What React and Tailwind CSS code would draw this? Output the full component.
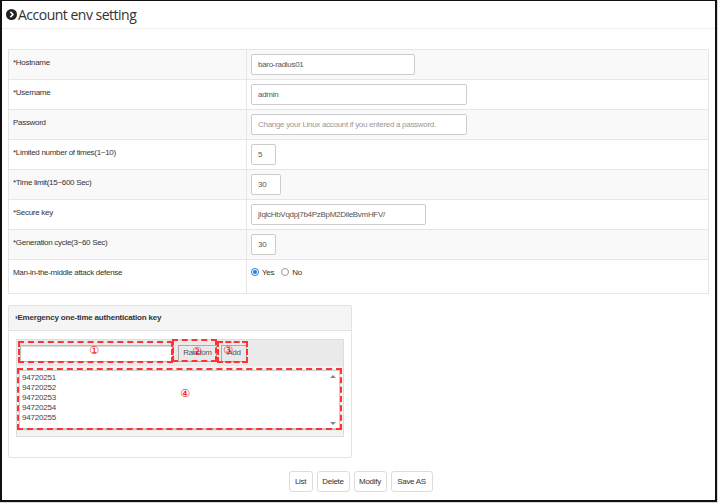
import React from 'react';

const rows = [
    { label: '*Hostname', value: 'baro-radius01', w: 'w-[164px]' },
    { label: '*Username', value: 'admin', w: 'w-[216px]' },
    { label: 'Password', placeholder: 'Change your Linux account if you entered a password.', w: 'w-[216px]' },
    { label: '*Limited number of times(1~10)', value: '5', w: 'w-[25px]' },
    { label: '*Time limit(15~600 Sec)', value: '30', w: 'w-[30px]' },
    { label: '*Secure key', value: 'jIqlcHbVqdpj7b4PzBpM2DileBvmHFV/', w: 'w-[175px]' },
    { label: '*Generation cycle(3~60 Sec)', value: '30', w: 'w-[25px]' },
];

const keys = ['94720251', '94720252', '94720253', '94720254', '94720255'];

const Mark = ({ children, className = '' }) => (
    <span className={`absolute text-[11px] leading-none text-[#e00] font-['DejaVu_Sans',sans-serif] ${className}`}>{children}</span>
);

const Btn = ({ children, w }) => (
    <button className={`${w} h-[21px] border border-[#ddd] rounded-[3px] bg-white text-[8px] tracking-[-0.3px] text-[#333]`}>{children}</button>
);

export default function App() {
    return (
        <div className="w-[718px] h-[503px] bg-[#d9d9d9] font-['Liberation_Sans',Arial,sans-serif]">
            <div className="w-[717px] h-[502px] bg-white border-l-2 border-t border-r-2 border-b-2 border-[#111] flex flex-col">
                {/* title */}
                <div className="h-[28px] flex items-center pl-[4px] border-b border-[#eee]">
                    <svg width="11" height="11" viewBox="0 0 12 12" className="mr-[1px]">
                        <circle cx="6" cy="6" r="6" fill="#222" />
                        <path d="M4.8 3.2 L7.6 6 L4.8 8.8" stroke="#fff" strokeWidth="1.8" fill="none" />
                    </svg>
                    <span className="text-[14px] text-[#333] font-['Open_Sans',sans-serif] tracking-[-0.5px]">Account env setting</span>
                </div>

                {/* form table */}
                <div className="mt-[20px] mx-[6px] border border-[#e6e6e6]">
                    {rows.map((r, i) => (
                        <div key={r.label} className={`flex h-[30px] border-b border-[#e6e6e6] ${i % 2 === 0 ? 'bg-[#f9f9f9]' : 'bg-white'}`}>
                            <div className="w-[238px] shrink-0 border-r border-[#e6e6e6] pl-[4px] pt-[7px] text-[8px] tracking-[-0.3px] text-[#333]">{r.label}</div>
                            <div className="pl-[4px] pt-[4px]">
                                <div className={`${r.w} h-[21px] border border-[#ccc] rounded-[2px] bg-white flex items-center pl-[6px] text-[8px] tracking-[-0.3px] whitespace-nowrap overflow-hidden ${r.placeholder ? 'text-[#999]' : 'text-[#555]'}`}>
                                    {r.value || r.placeholder}
                                </div>
                            </div>
                        </div>
                    ))}
                    <div className="flex h-[33px]">
                        <div className="w-[238px] shrink-0 border-r border-[#e6e6e6] pl-[4px] pt-[7px] text-[8px] tracking-[-0.3px] text-[#333]">Man-in-the-middle attack defense</div>
                        <div className="pl-[4px] pt-[7px] flex items-start gap-[3px] text-[8px] tracking-[-0.3px] text-[#333]">
                            <span className="mt-[1px] w-[8px] h-[8px] rounded-full border border-[#2a7be4] flex items-center justify-center">
                                <span className="w-[4px] h-[4px] rounded-full bg-[#2a7be4]" />
                            </span>
                            <span>Yes</span>
                            <span className="ml-[4px] mt-[1px] w-[8px] h-[8px] rounded-full border border-[#999]" />
                            <span>No</span>
                        </div>
                    </div>
                </div>

                {/* emergency panel */}
                <div className="mt-[11px] ml-[6px] w-[344px] h-[153px] border border-[#e3e3e3] rounded-[2px] flex flex-col">
                    <div className="h-[25px] bg-[#f5f5f5] border-b border-[#e3e3e3] flex items-center pl-[6px] text-[8px] tracking-[-0.2px] font-bold text-[#333]">
                        ›Emergency one-time authentication key
                    </div>
                    <div className="mt-[8px] ml-[7px] w-[328px] h-[98px] border border-[#ddd] bg-[#f3f3f3] flex flex-col">
                        <div className="relative h-[26px] bg-[#eaeaea] flex items-center pl-[3px] gap-[4px]">
                            <div className="w-[154px] h-[17px] bg-white border border-[#bbb] shadow-[inset_0_1px_1px_rgba(0,0,0,0.15)]" />
                            <button className="h-[17px] w-[39px] border border-[#aaa] bg-[#e9e9e9] text-[8px] tracking-[-0.3px] text-[#555]">Random</button>
                            <button className="h-[17px] w-[26px] border border-[#aaa] bg-[#e9e9e9] text-[8px] tracking-[-0.3px] text-[#555]">Add</button>
                            <div className="absolute left-[1px] top-[1px] w-[155px] h-[22px] border-2 border-dashed border-[#f33]" />
                            <div className="absolute left-[155px] top-[-1px] w-[45px] h-[23px] border-2 border-dashed border-[#f33]" />
                            <div className="absolute left-[200px] top-[1px] w-[31px] h-[22px] border-2 border-dashed border-[#f33]" />
                            <Mark className="left-[72px] top-[5px]">①</Mark>
                            <Mark className="left-[175px] top-[6px]">②</Mark>
                            <Mark className="left-[206px] top-[5px]">③</Mark>
                        </div>
                        <div className="relative mt-[4px] ml-[2px] w-[321px] h-[59px] bg-white border border-[#ccc] shadow-[0_1px_1px_rgba(0,0,0,0.2)]">
                            <div className="pl-[2px] pt-[2px] text-[8px] leading-[10px] tracking-[-0.2px] text-[#444]">
                                {keys.map((k) => <div key={k}>{k}</div>)}
                            </div>
                            <span className="absolute right-[3px] top-[4px] w-0 h-0 border-l-[3px] border-r-[3px] border-b-[3px] border-l-transparent border-r-transparent border-b-[#888]" />
                            <span className="absolute right-[3px] bottom-[3px] w-0 h-0 border-l-[3px] border-r-[3px] border-t-[3px] border-l-transparent border-r-transparent border-t-[#888]" />
                            <div className="absolute left-[-3px] top-[-3px] w-[325px] h-[62px] border-2 border-dashed border-[#f33]" />
                            <Mark className="left-[160px] top-[17px]">④</Mark>
                        </div>
                    </div>
                </div>

                {/* bottom buttons */}
                <div className="mt-[13px] flex justify-center gap-[4px] pl-[4px]">
                    <Btn w="w-[24px]">List</Btn>
                    <Btn w="w-[33px]">Delete</Btn>
                    <Btn w="w-[33px]">Modify</Btn>
                    <Btn w="w-[42px]">Save AS</Btn>
                </div>
            </div>
        </div>
    );
}
